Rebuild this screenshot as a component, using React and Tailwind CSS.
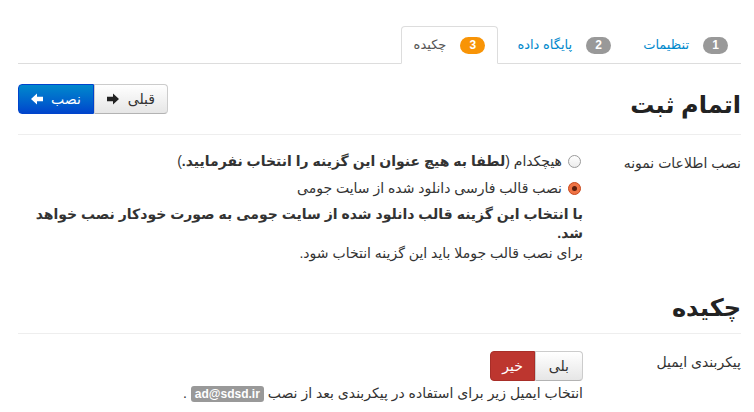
import React from 'react';

const FONT = { fontFamily: '"Liberation Sans", "DejaVu Sans", sans-serif' };

function ArrowIcon({ dir = 'left', color = '#fff' }) {
  // bold block arrow, like bootstrap's glyph
  const d = dir === 'left'
    ? 'M0 6 L6 0.5 L6 3.8 L12 3.8 L12 8.2 L6 8.2 L6 11.5 Z'
    : 'M12 6 L6 0.5 L6 3.8 L0 3.8 L0 8.2 L6 8.2 L6 11.5 Z';
  return (
    <svg width="12" height="12" viewBox="0 0 12 12" className="shrink-0">
      <path d={d} fill={color} />
    </svg>
  );
}

function Tab({ num, label, active, badge }) {
  return (
    <li className="-mb-px">
      <div
        className={`flex items-center gap-[14px] px-[12px] py-[8px] text-[13px] leading-[20px] border rounded-t-[4px] ${
          active ? 'bg-white border-[#ddd] border-b-white text-[#555]' : 'border-transparent text-[#0088cc]'
        }`}
      >
        <span className={`inline-block w-[25px] h-[17px] rounded-full text-white text-[12px] font-bold leading-[17px] text-center ${badge}`}>
          {num}
        </span>
        <span>{label}</span>
      </div>
    </li>
  );
}

function Radio({ checked }) {
  if (checked) {
    return (
      <span className="inline-flex w-[13px] h-[13px] rounded-full border border-[#c9481c] bg-[#ef7344] items-center justify-center shrink-0">
        <span className="w-[5px] h-[5px] rounded-full bg-[#5b1e0c]" />
      </span>
    );
  }
  return <span className="inline-block w-[13px] h-[13px] rounded-full border border-[#9a9a9a] bg-gradient-to-b from-white to-[#ececec] shrink-0" />;
}

export default function App() {
  return (
    <div dir="rtl" style={FONT} className="bg-white min-h-[412px] pl-[18px] pr-[13px] pt-[26px] text-[14px] text-[#333]">
      {/* Tabs */}
      <ul className="flex gap-[6px] border-b border-[#ddd]">
        <Tab num="1" label="تنظیمات" badge="bg-[#999]" />
        <Tab num="2" label="پایگاه داده" badge="bg-[#999]" />
        <Tab num="3" label="چکیده" badge="bg-[#f89406]" active />
      </ul>

      {/* Header row */}
      <div className="flex justify-between items-start mt-[21px]">
        <h3 className="text-[24px] font-bold leading-[40px] text-[#222]">اتمام ثبت</h3>
        <div className="flex -mt-[1px]">
          <button className="flex items-center gap-[9px] h-[30px] px-[12px] border border-[#ccc] border-b-[#b3b3b3] rounded-r-[4px] bg-gradient-to-b from-white to-[#e6e6e6] text-[#333]">
            <span>قبلی</span>
            <ArrowIcon dir="right" color="#222" />
          </button>
          <button className="flex items-center gap-[8px] h-[30px] px-[12px] border border-[#0044cc] rounded-l-[4px] bg-gradient-to-b from-[#0088cc] to-[#0044cc] text-white">
            <span>نصب</span>
            <ArrowIcon dir="left" color="#fff" />
          </button>
        </div>
      </div>
      <div className="mt-[9px] border-t border-[#eee]" />

      {/* Sample data row */}
      <div className="flex mt-[18px]">
        <div className="w-[158px] shrink-0 leading-[20px]">نصب اطلاعات نمونه</div>
        <div className="flex-1">
          <div className="flex items-center gap-[6px] leading-[20px] -mt-[2px] pr-[2px]">
            <Radio />
            <span>
              هیچکدام (<b>لطفا به هیچ عنوان این گزینه را انتخاب نفرمایید.</b>)
            </span>
          </div>
          <div className="flex items-center gap-[6px] leading-[20px] mt-[7px] pr-[2px]">
            <Radio checked />
            <span>نصب قالب فارسی دانلود شده از سایت جومی</span>
          </div>
          <p className="mt-[7px] leading-[19px] font-bold">
            با انتخاب این گزینه قالب دانلود شده از سایت جومی به صورت خودکار نصب خواهد شد.
          </p>
          <p className="leading-[20px]">برای نصب قالب جوملا باید این گزینه انتخاب شود.</p>
        </div>
      </div>

      {/* Summary */}
      <h3 className="mt-[25px] text-[24px] font-bold leading-[40px] text-[#222]">چکیده</h3>
      <div className="mt-[5px] border-t border-[#eee]" />

      <div className="flex mt-[18px]">
        <div className="w-[158px] shrink-0 leading-[20px]">پیکربندی ایمیل</div>
        <div className="flex-1">
          <div className="flex -mt-[1px]">
            <button className="h-[30px] px-[13px] border border-[#ccc] border-b-[#b3b3b3] rounded-r-[4px] bg-gradient-to-b from-white to-[#e6e6e6] text-[#333]">
              بلی
            </button>
            <button className="h-[30px] px-[11px] border border-[#a82e28] rounded-l-[4px] bg-[#bd362f] text-white">
              خیر
            </button>
          </div>
          <div className="leading-[20px] mt-[2px]">
            انتخاب ایمیل زیر برای استفاده در پیکربندی بعد از نصب{' '}
            <span className="inline-block px-[4px] rounded-[3px] bg-[#999] text-white font-bold text-[12px] leading-[16px]">ad@sdsd.ir</span> .
          </div>
        </div>
      </div>
    </div>
  );
}
